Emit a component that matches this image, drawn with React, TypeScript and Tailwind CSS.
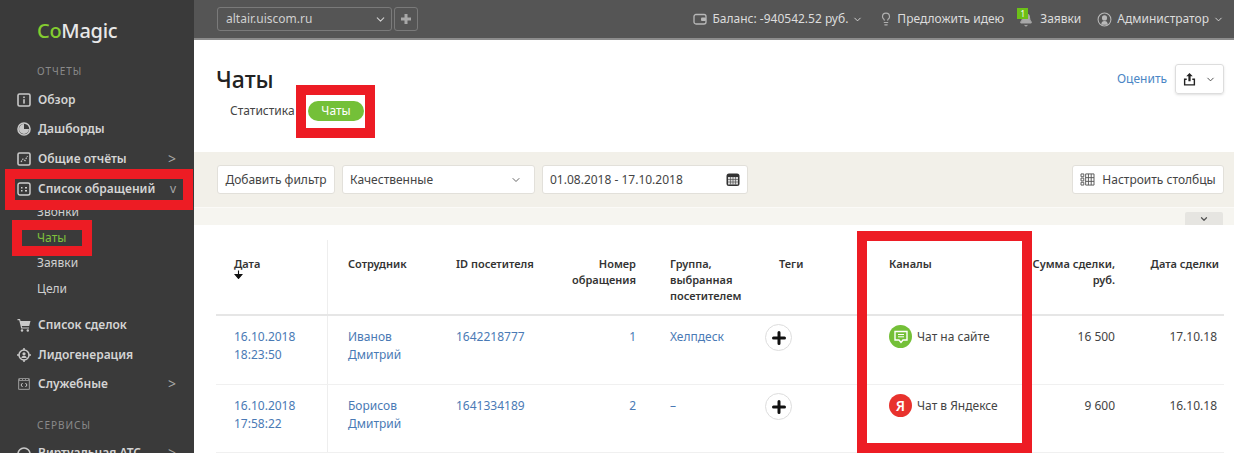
import type { ReactNode } from 'react'
import { Bell, ChevronDown, Lightbulb } from 'lucide-react'

const Svg = ({ children, className = 'w-[14px] h-[14px]' }: { children: ReactNode; className?: string }) => (
  <svg viewBox="0 0 14 14" className={`${className} shrink-0`}>{children}</svg>
)

const IconOverview = () => (
  <Svg>
    <rect x="1" y="1" width="12" height="12" rx="1.5" fill="none" stroke="#c8c8c8" strokeWidth="1.6" />
    <rect x="6.2" y="3.5" width="1.6" height="1.6" fill="#c8c8c8" />
    <rect x="6.2" y="6.2" width="1.6" height="4.4" fill="#c8c8c8" />
  </Svg>
)
const IconDash = () => (
  <Svg>
    <circle cx="7" cy="7" r="6" fill="none" stroke="#c8c8c8" strokeWidth="1.6" />
    <path d="M7 7V2a5 5 0 1 0 5 5z" fill="#c8c8c8" />
  </Svg>
)
const IconReports = () => (
  <Svg>
    <rect x="1" y="1" width="12" height="12" rx="1.5" fill="none" stroke="#c8c8c8" strokeWidth="1.6" />
    <path d="M4 10l2-3 2 1.5L10.500 4" fill="none" stroke="#c8c8c8" strokeWidth="1.2" strokeDasharray="1.600 1" />
  </Svg>
)
const IconList = () => (
  <Svg>
    <rect x="1" y="1" width="12" height="12" rx="2" fill="none" stroke="#d0d0d0" strokeWidth="1.4" />
    <path d="M4 5h1.500v1.500H4zM8 5h2v1.500H8zM4 8h1.500v1.500H4zM8 8h2v1.500H8z" fill="#d0d0d0" />
  </Svg>
)
const IconCart = () => (
  <Svg>
    <path d="M0.500 1H3l.6 2H13.500l-1.300 5H4.800l.4 1.400H12v1.200H4.200L2.200 2.200H.5z" fill="#c8c8c8" />
    <circle cx="5" cy="12.500" r="1.200" fill="#c8c8c8" />
    <circle cx="10.800" cy="12.500" r="1.200" fill="#c8c8c8" />
  </Svg>
)
const IconLead = () => (
  <Svg>
    <circle cx="7" cy="7" r="5" fill="none" stroke="#c8c8c8" strokeWidth="1.500" />
    <circle cx="7" cy="5.800" r="1.600" fill="#c8c8c8" />
    <path d="M4.300 10c.3-1.600 1.300-2.300 2.700-2.300s2.400.7 2.700 2.300z" fill="#c8c8c8" />
    <path d="M7 0v2.500M7 11.500V14M0 7h2.500M11.500 7H14" stroke="#c8c8c8" strokeWidth="1.500" />
  </Svg>
)
const IconService = () => (
  <Svg>
    <rect x="1" y="1" width="12" height="12" rx="1.500" fill="#8e8e8e" />
    <rect x="2.200" y="4" width="9.600" height="7.800" fill="#3a3a3a" />
    <path d="M3 2.500h2M6 2.500h2M9 2.500h2" stroke="#3a3a3a" />
    <path d="M5.500 6L4 8l1.500 2M8.500 6L10 8l-1.500 2" fill="none" stroke="#c8c8c8" />
  </Svg>
)
const IconPhone = () => (
  <Svg>
    <circle cx="7" cy="8" r="6" fill="none" stroke="#c8c8c8" strokeWidth="1.600" />
  </Svg>
)

function NavItem({ icon, label, arrow }: { icon: ReactNode; label: string; arrow?: 'right' | 'down' }) {
  return (
    <div className="h-[29.600px] shrink-0 flex items-center pl-[17px] pr-[18px] text-[12px] font-semibold text-[#d4d4d4]">
      <div className="w-[21px] flex">{icon}</div>
      <span className="flex-1 whitespace-nowrap">{label}</span>
      {arrow === 'right' && <span className="text-[14px] font-normal text-[#a8a8a8] leading-none">&gt;</span>}
      {arrow === 'down' && <span className="text-[12px] font-normal text-[#a8a8a8] leading-none">v</span>}
    </div>
  )
}

function SubItem({ label, active }: { label: string; active?: boolean }) {
  return (
    <div className={`h-[25.500px] shrink-0 flex items-center pl-[37px] text-[12px] ${active ? 'text-[#7ec13c]' : 'text-[#cfcfcf]'}`}>
      {label}
    </div>
  )
}

function Sidebar() {
  return (
    <aside className="w-[194px] shrink-0 bg-[#3a3a3a] flex flex-col">
      <div className="h-[62px] shrink-0 pl-[37px] pt-[16px] text-[20px] leading-[30px] tracking-[-0.3px] font-['Lato',sans-serif] font-medium">
        <span className="text-[#84cc30]">Co</span>
        <span className="text-[#e8e8e8]">Magic</span>
      </div>
      <div className="h-[18px] shrink-0 flex items-center pl-[37px] text-[10px] tracking-[1px] text-[#8a8a8a]">ОТЧЕТЫ</div>
      <div className="h-[5px] shrink-0" />
      <NavItem icon={<IconOverview />} label="Обзор" />
      <NavItem icon={<IconDash />} label="Дашборды" />
      <NavItem icon={<IconReports />} label="Общие отчёты" arrow="right" />
      <NavItem icon={<IconList />} label="Список обращений" arrow="down" />
      <div className="mt-[-4px] shrink-0 flex flex-col">
        <SubItem label="Звонки" />
        <SubItem label="Чаты" active />
        <SubItem label="Заявки" />
        <SubItem label="Цели" />
      </div>
      <div className="h-[9px] shrink-0" />
      <NavItem icon={<IconCart />} label="Список сделок" />
      <NavItem icon={<IconLead />} label="Лидогенерация" />
      <NavItem icon={<IconService />} label="Служебные" arrow="right" />
      <div className="h-[17px] shrink-0" />
      <div className="h-[18px] shrink-0 flex items-center pl-[37px] text-[10px] tracking-[1px] text-[#8a8a8a]">СЕРВИСЫ</div>
      <div className="h-[4px] shrink-0" />
      <NavItem icon={<IconPhone />} label="Виртуальная АТС" arrow="right" />
    </aside>
  )
}

function TopBar() {
  return (
    <header className="h-[40px] shrink-0 bg-[#555555] border-b-2 border-[#8c8c8c] flex items-center pl-[23px] pr-[10px] text-[12px] text-[#dcdcdc]">
      <div className="w-[175px] h-[24px] rounded-[3px] border border-[#7a7a7a] flex items-center justify-between pl-[8px] pr-[4px] text-[#d0d0d0]">
        <span>altair.uiscom.ru</span>
        <ChevronDown className="w-[13px] h-[13px]" />
      </div>
      <div className="w-[24px] h-[24px] ml-[2px] rounded-[3px] border border-[#7a7a7a] flex items-center justify-center">
        <svg viewBox="0 0 12 12" className="w-[12px] h-[12px]">
          <path d="M4.500 1h3v3.500H11v3H7.500V11h-3V7.500H1v-3h3.500z" fill="#a8a8a8" />
        </svg>
      </div>
      <div className="flex-1" />
      <svg viewBox="0 0 14 14" className="w-[14px] h-[14px] mr-[5px] mt-[-1px]">
        <rect x="1" y="2.500" width="12" height="9.500" rx="2" fill="none" stroke="#b8b8b8" strokeWidth="1.300" />
        <rect x="8" y="5.500" width="5" height="3.500" rx="1" fill="#b8b8b8" />
      </svg>
      <span>Баланс: -940542.52 руб.</span>
      <ChevronDown className="w-[11px] h-[11px] ml-[4px]" />
      <Lightbulb className="w-[14px] h-[14px] ml-[16px] mr-[4px] text-[#b0b0b0]" />
      <span>Предложить идею</span>
      <div className="relative w-[16px] h-[16px] ml-[13px] mr-[7px]">
        <Bell className="w-[14px] h-[14px] ml-[2px] mt-[2px] text-[#a8a8a8] fill-[#a8a8a8]" />
        <span className="absolute left-0 top-[-3px] w-[11px] h-[11px] bg-[#6cc018] text-white text-[8px] leading-[11px] text-center">1</span>
      </div>
      <span>Заявки</span>
      <svg viewBox="0 0 14 14" className="w-[15px] h-[15px] ml-[16px] mr-[5px]">
        <circle cx="7" cy="7" r="6" fill="none" stroke="#b8b8b8" strokeWidth="1" />
        <circle cx="7" cy="5.500" r="2.400" fill="#b8b8b8" />
        <path d="M4 12c0-2.500 1.200-3.500 3-3.500s3 1 3 3.500z" fill="#b8b8b8" />
      </svg>
      <span>Администратор</span>
      <ChevronDown className="w-[11px] h-[11px] ml-[4px]" />
    </header>
  )
}

function TitleBlock() {
  return (
    <section className="h-[112px] shrink-0 pl-[22px] pr-[10px] pt-[24px] flex justify-between">
      <div>
        <h1 className="text-[23px] leading-[30px] font-medium text-[#222222]">Чаты</h1>
        <div className="flex items-center mt-[7px] ml-[14px] text-[12px] text-[#444444]">
          <span className="w-[78px]">Статистика</span>
          <span className="w-[56px] h-[20px] rounded-full bg-[#74c038] text-white text-center leading-[20px]">Чаты</span>
        </div>
      </div>
      <div className="flex items-start">
        <span className="text-[12px] text-[#4a86c5] mt-[6px] mr-[8px]">Оценить</span>
        <div className="w-[49px] h-[30px] rounded-[3px] border border-[#dddddd] shadow-sm flex items-center justify-center gap-[9px]">
          <svg viewBox="0 0 14 14" className="w-[13px] h-[13px]">
            <path d="M7 0l3.500 3.500H8.200V9H5.800V3.500H3.500z" fill="#222222" />
            <path d="M1 6h3v1.500H2.500v4.500h9V7.500H10V6h3v7.500H1z" fill="#222222" />
          </svg>
          <ChevronDown className="w-[11px] h-[11px] text-[#444444]" />
        </div>
      </div>
    </section>
  )
}

const btn = 'h-[29px] bg-white rounded-[3px] border border-[#e2e0da] flex items-center text-[12px] text-[#444444]'

function FilterBar() {
  return (
    <section className="h-[56px] shrink-0 bg-[#f2f0e9] border-b border-[#fbfaf7] flex items-center pl-[23px] pr-[10px] gap-[7px]">
      <div className={`${btn} w-[118px] justify-center`}>Добавить фильтр</div>
      <div className={`${btn} w-[193px] justify-between pl-[7px] pr-[12px]`}>
        <span>Качественные</span>
        <ChevronDown className="w-[12px] h-[12px] text-[#666666]" />
      </div>
      <div className={`${btn} w-[206px] justify-between pl-[7px] pr-[7px]`}>
        <span>01.08.2018 - 17.10.2018</span>
        <svg viewBox="0 0 14 14" className="w-[14px] h-[15px]">
          <rect x="0.500" y="1" width="13" height="12.500" rx="2.500" fill="#333333" />
          <rect x="2" y="4.500" width="10" height="7.500" fill="#d8d8d8" />
          <path d="M2 7h10M2 9.500h10M4.500 4.500V12M7 4.500V12M9.500 4.500V12" stroke="#444444" strokeWidth="0.600" />
        </svg>
      </div>
      <div className="flex-1" />
      <div className={`${btn} w-[152px] justify-center gap-[7px]`}>
        <svg viewBox="0 0 16 14" className="w-[15px] h-[13px]">
          <path d="M1 1h3v3H1zM1 5.500h3v3H1zM1 10h3v3H1zM6 1h9v12H6zM6 5h9M6 9h9M9 1v12M12 1v12" fill="none" stroke="#555555" strokeWidth="1" />
        </svg>
        <span>Настроить столбцы</span>
      </div>
    </section>
  )
}

function Strip() {
  return (
    <div className="h-[17px] shrink-0 bg-[#f6f5f0] flex justify-end pr-[11px] items-end">
      <div className="w-[38px] h-[13px] bg-[#e6e5e1] rounded-t-[2px] flex items-center justify-center">
        <ChevronDown className="w-[10px] h-[10px] text-[#555555]" strokeWidth={3} />
      </div>
    </div>
  )
}

const grid = 'grid grid-cols-[112px_108px_94px_106px_123px_110px_131px_115px_109px]'
const headCell = 'pt-[31px] text-[11px] leading-[16px] font-semibold text-[#333333]'
const link = 'text-[#4a7ab5]'

function Row({ date, time, name, surname, id, num, group, channel, sum, closed, height }: {
  date: string; time: string; name: string; surname: string; id: string; num: string; group: string
  channel: ReactNode; sum: string; closed: string; height: string
}) {
  const cell = 'pt-[12px] text-[12px] leading-[18px]'
  return (
    <div className={`${grid} ${height} border-b border-[#f0f0f0]`}>
      <div className={`${cell} pl-[18px] border-r border-[#eeeeee] ${link}`}>{date}<br />{time}</div>
      <div className={`${cell} pl-[20px] ${link}`}>{name}<br />{surname}</div>
      <div className={`${cell} pl-[20px] ${link}`}>{id}</div>
      <div className={`${cell} text-right ${link}`}>{num}</div>
      <div className={`${cell} pl-[34px] ${link}`}>{group}</div>
      <div className="pt-[8px]">
        <div className="ml-[6px] w-[27px] h-[27px] rounded-full border border-[#dddddd] flex items-center justify-center">
          <svg viewBox="0 0 14 14" className="w-[14px] h-[14px]">
            <path d="M7 1.500v11M1.500 7h11" stroke="#111111" strokeWidth="3" strokeLinecap="round" />
          </svg>
        </div>
      </div>
      <div className="pl-[20px] pt-[9px] flex items-start gap-[5px] text-[12px] text-[#444444]">{channel}</div>
      <div className={`${cell} text-right text-[#444444]`}>{sum}</div>
      <div className={`${cell} text-right pr-[7px] text-[#444444]`}>{closed}</div>
    </div>
  )
}

function ChatIcon() {
  return (
    <span className="w-[23px] h-[23px] rounded-full bg-[#74c038] flex items-center justify-center shrink-0">
      <svg viewBox="0 0 14 14" className="w-[14px] h-[14px]">
        <path d="M1 1.500h12v8.500H9l-2 2.500-2-2.500H1z" fill="none" stroke="#ffffff" strokeWidth="1.400" />
        <path d="M4 4.500h6M4 6.800h6" stroke="#ffffff" strokeWidth="1" />
      </svg>
    </span>
  )
}

function YandexIcon() {
  return (
    <span className="w-[23px] h-[23px] rounded-full bg-[#e8322d] text-white text-[14px] leading-[23px] font-semibold text-center shrink-0">Я</span>
  )
}

function DataTable() {
  return (
    <section className="flex-1 mr-[10px] ml-[22px]">
      <div className={`${grid} h-[91px] border-b-2 border-[#e6e6e6]`}>
        <div className="pl-[18px] mt-[15px] pt-[16px] text-[11px] leading-[16px] font-semibold text-[#333333] border-r border-[#eeeeee]">
          Дата
          <svg viewBox="0 0 8 8" className="w-[9px] h-[9px] mt-[-2px]">
            <path d="M4 0.500v4M1 4h6L4 7.500z" fill="#111111" stroke="#111111" strokeWidth="1" />
          </svg>
        </div>
        <div className={`${headCell} pl-[20px] whitespace-nowrap`}>Сотрудник</div>
        <div className={`${headCell} pl-[20px] whitespace-nowrap`}>ID посетителя</div>
        <div className={`${headCell} text-right`}>Номер<br />обращения</div>
        <div className={`${headCell} pl-[34px]`}>Группа,<br />выбранная<br />посетителем</div>
        <div className={`${headCell} pl-[20px]`}>Теги</div>
        <div className={`${headCell} pl-[20px]`}>Каналы</div>
        <div className={`${headCell} text-right whitespace-nowrap`}>Сумма сделки,<br />руб.</div>
        <div className={`${headCell} text-right pr-[5px] whitespace-nowrap`}>Дата сделки</div>
      </div>
      <Row height="h-[69px]" date="16.10.2018" time="18:23:50" name="Иванов" surname="Дмитрий" id="1642218777" num="1" group="Хелпдеск"
        channel={<><ChatIcon /><span className="leading-[23px]">Чат на сайте</span></>} sum="16 500" closed="17.10.18" />
      <Row height="h-[68px]" date="16.10.2018" time="17:58:22" name="Борисов" surname="Дмитрий" id="1641334189" num="2" group="–"
        channel={<><YandexIcon /><span className="leading-[23px]">Чат в Яндексе</span></>} sum="9 600" closed="16.10.18" />
    </section>
  )
}

export default function App() {
  return (
    <div className="relative w-[1234px] h-[453px] overflow-hidden flex bg-white font-['Noto_Sans',sans-serif]">
      <Sidebar />
      <main className="flex-1 min-w-0 flex flex-col">
        <TopBar />
        <TitleBlock />
        <FilterBar />
        <Strip />
        <DataTable />
      </main>
      {/* annotation frames drawn over the screenshot */}
      <div className="absolute left-[5px] top-[169px] w-[188px] h-[41px] border-[10px] border-[#ed1c24]" />
      <div className="absolute left-[12px] top-[220px] w-[80px] h-[36px] border-[10px] border-[#ed1c24]" />
      <div className="absolute left-[296px] top-[85px] w-[79px] h-[53px] border-[10px] border-[#ed1c24]" />
      <div className="absolute left-[857px] top-[231px] w-[175px] h-[222px] border-[10px] border-[#ed1c24]" />
    </div>
  )
}
